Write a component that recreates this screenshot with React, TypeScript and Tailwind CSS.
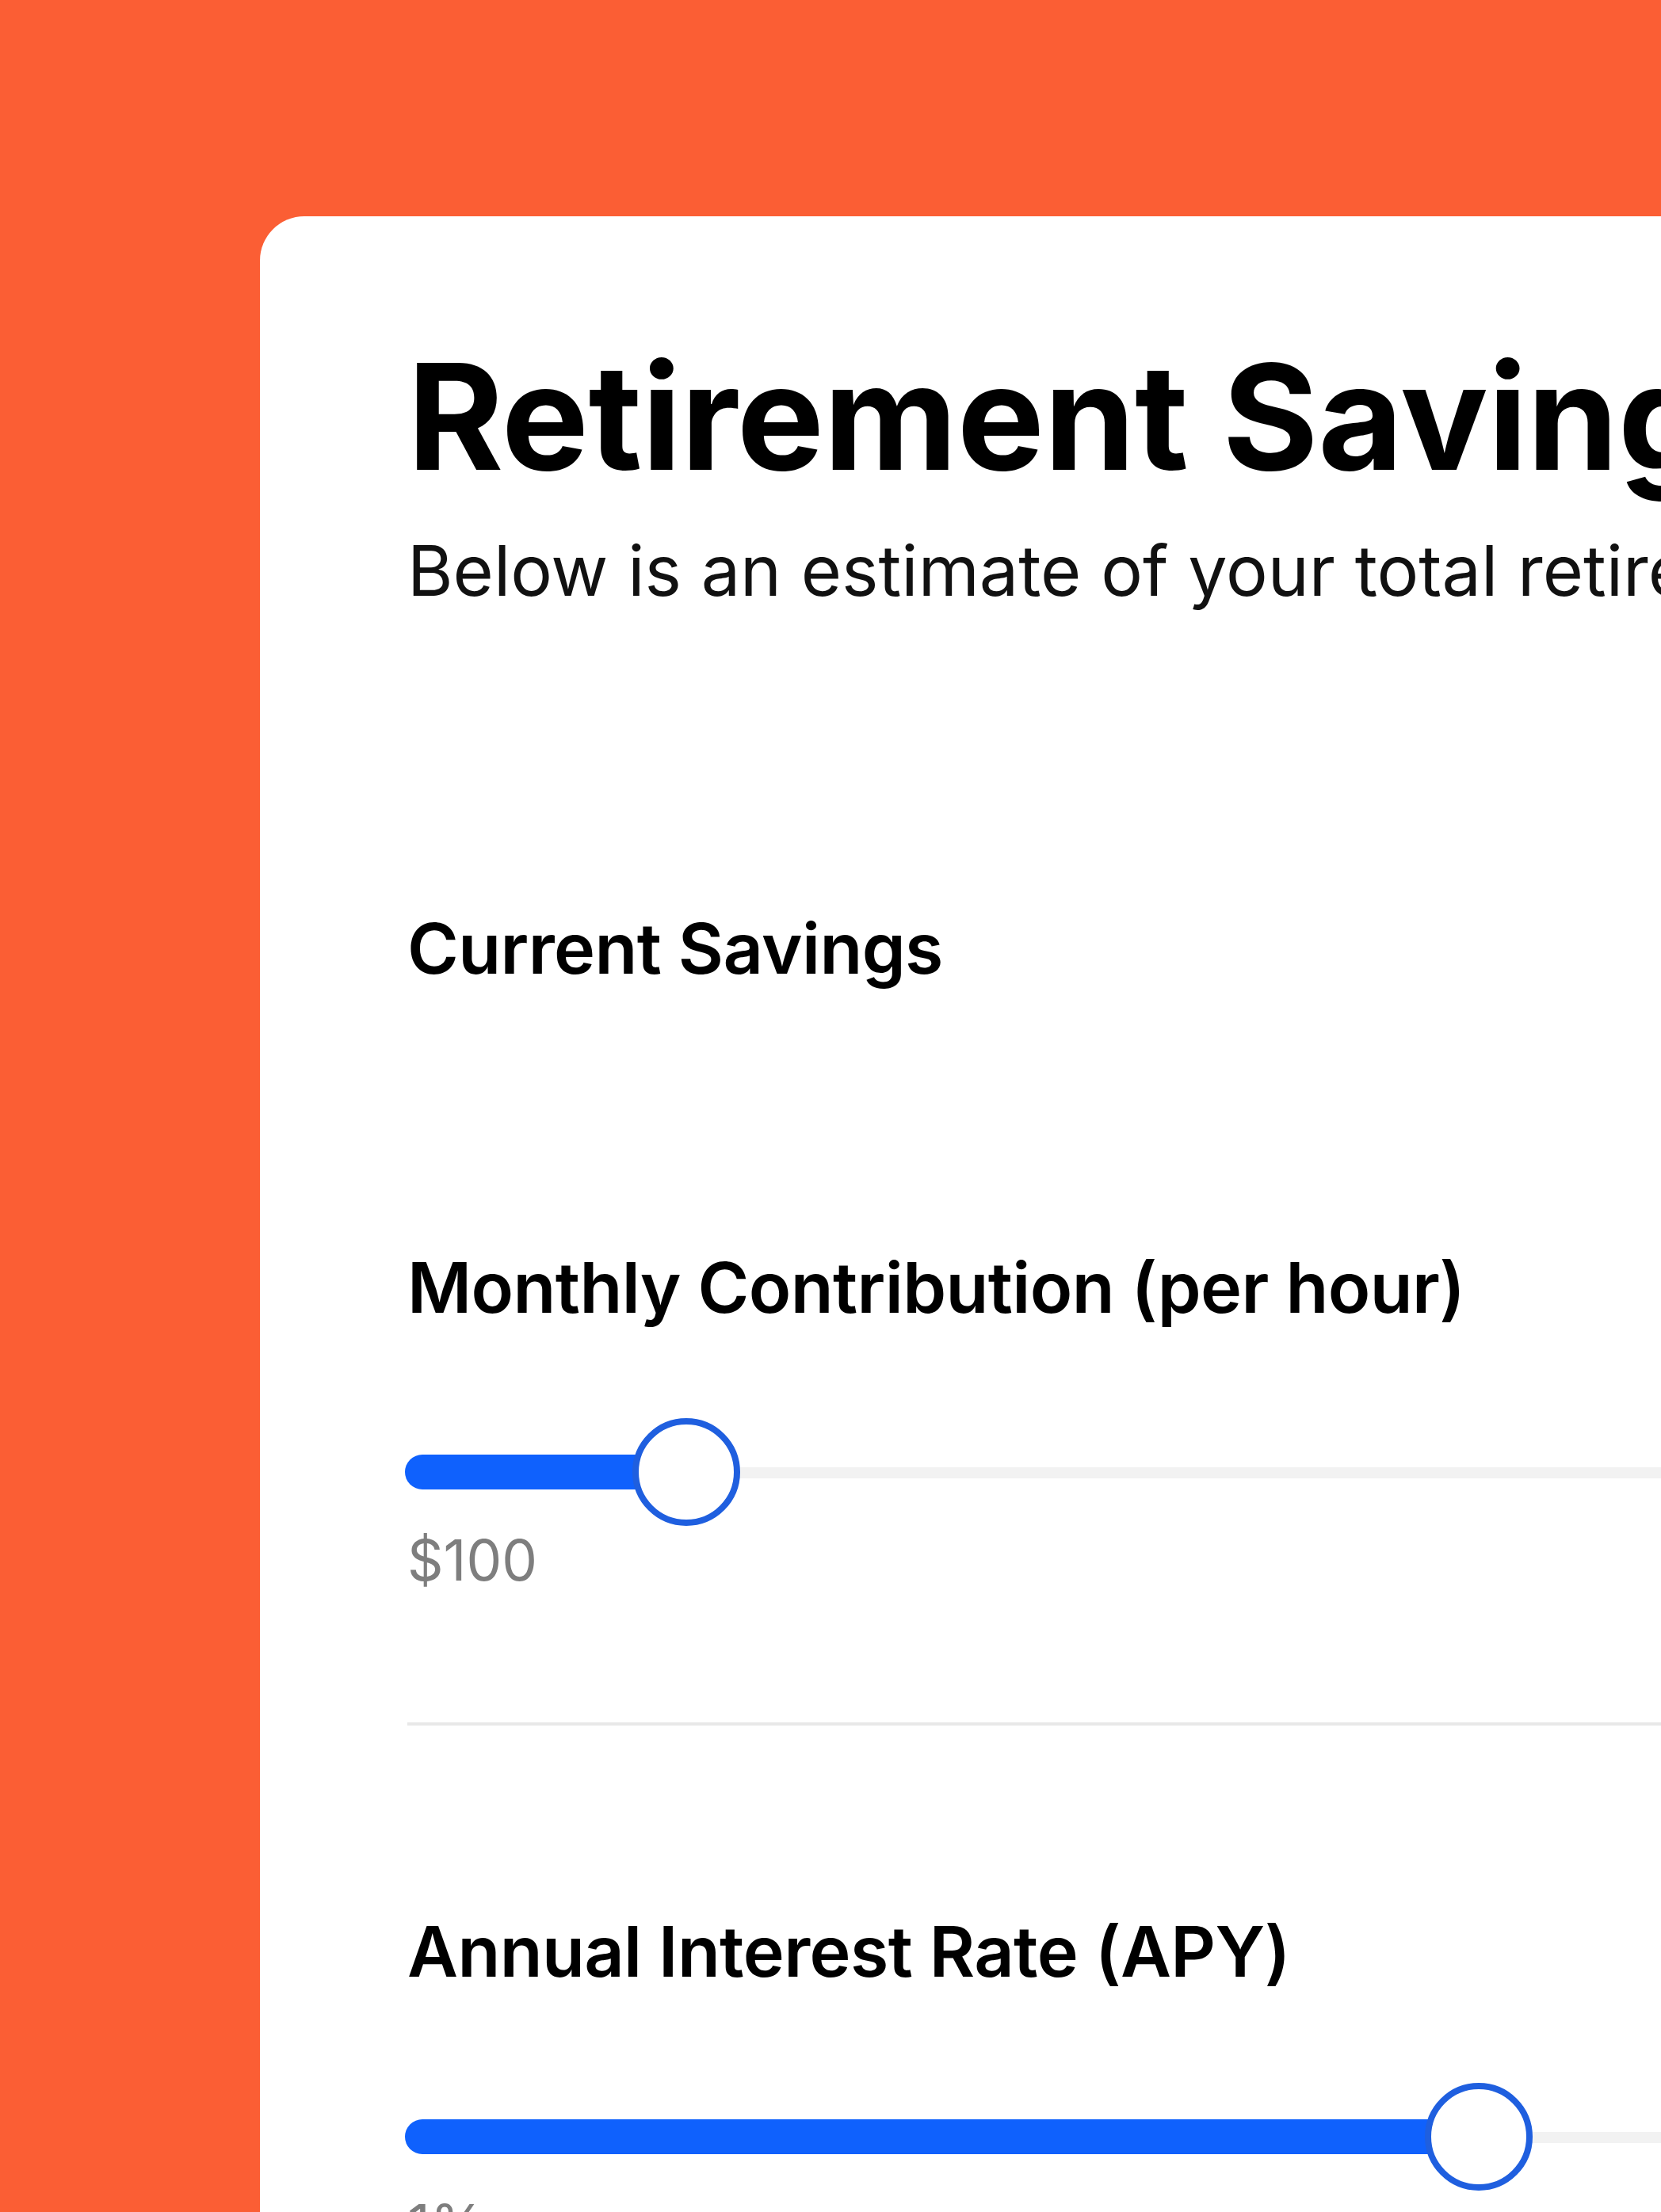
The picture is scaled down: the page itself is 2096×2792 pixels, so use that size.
import React from 'react';

type SliderProps = {
  percent: number;
  label: string;
};

// Track + thumb; thumb sits over the track, so it's positioned absolutely
const Slider: React.FC<SliderProps> = ({ percent, label }) => {
  return (
    <div className="flex flex-col">
      <div className="relative h-[140px] w-[1900px] -ml-[3px]">
        <div className="absolute left-0 right-0 top-[64px] h-[14px] rounded-full bg-[#f2f2f2]" />
        <div
          className="absolute left-0 top-[48px] h-[44px] rounded-full bg-[#0f61fd]"
          style={{ width: `${percent}%` }}
        />
        <div
          className="absolute top-[2px] h-[136px] w-[136px] -translate-x-1/2 rounded-full border-[8px] border-[#1f5fdf] bg-white"
          style={{ left: `${percent}%` }}
        />
      </div>
      <div className="mt-[6px] whitespace-nowrap text-[71px] leading-[71px] text-[#7e7e7e]">{label}</div>
    </div>
  );
};

export default function App() {
  return (
    <div className="h-[2792px] w-[2096px] overflow-hidden bg-[#fb5e34] pl-[328px] pt-[273px] font-['Inter','Noto_Sans',sans-serif]">
      <div className="min-h-[2700px] w-[2300px] rounded-[56px] bg-white pl-[186px] pt-[161px] text-black">
        <h1 className="whitespace-nowrap text-[185px] font-bold leading-[185px] tracking-[-0.5px]">Retirement Savings</h1>
        <p className="mt-[57px] whitespace-nowrap text-[88px] leading-[88px] text-[#111]">
          Below is an estimate of your total retirement savings
        </p>

        <h2 className="mt-[389px] whitespace-nowrap text-[88px] font-semibold leading-[88px] tracking-[-0.6px]">Current Savings</h2>

        <h2 className="mt-[340px] whitespace-nowrap text-[88px] font-semibold leading-[88px] tracking-[-0.6px]">Monthly Contribution (per hour)</h2>
        <div className="mt-[119px]">
          <Slider percent={18.7} label="$100" />
        </div>

        <div className="mt-[169px] h-[4px] w-[1900px] bg-[#e8e8e8]" />

        <h2 className="mt-[241px] whitespace-nowrap text-[88px] font-semibold leading-[88px] tracking-[-0.6px]">Annual Interest Rate (APY)</h2>
        <div className="mt-[120px]">
          <Slider percent={71.3} label="1%" />
        </div>
      </div>
    </div>
  );
}
